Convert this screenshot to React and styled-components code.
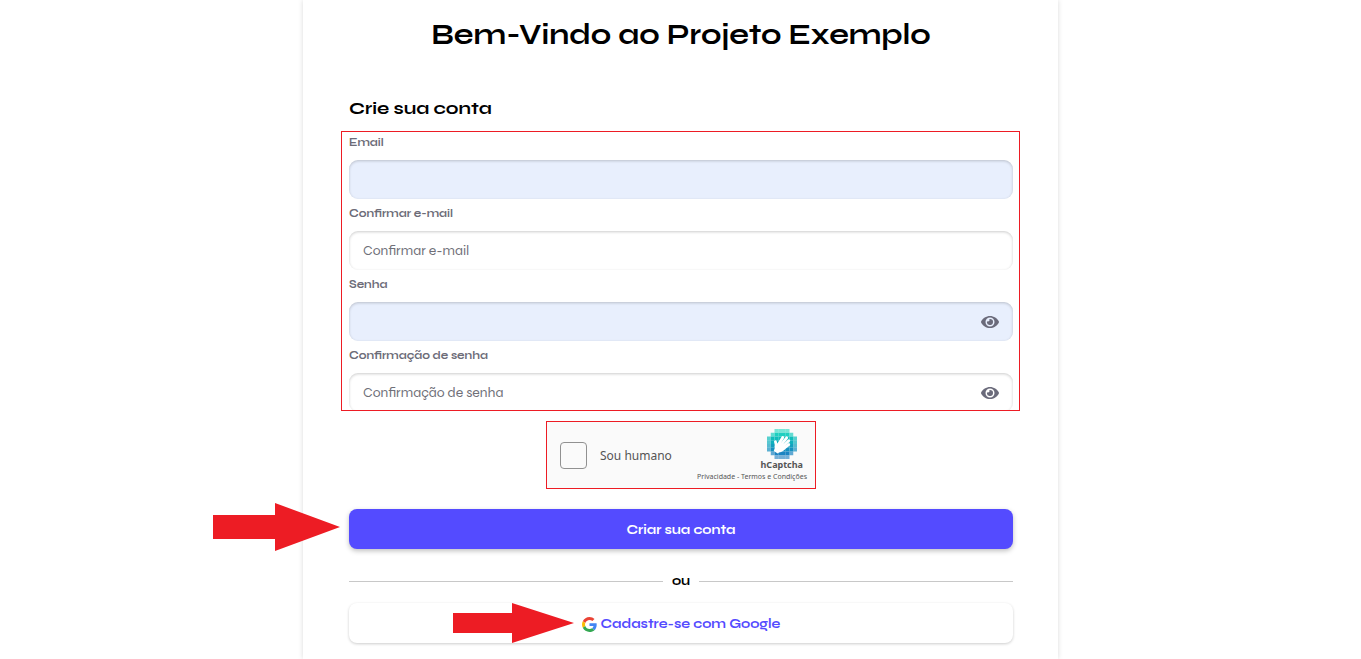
import React, { useState } from "react";
import styled, { createGlobalStyle } from "styled-components";
import { FaEye } from "react-icons/fa";

const fields = [
  { id: "email", label: "Email", type: "email", filled: true },
  {
    id: "confirmEmail",
    label: "Confirmar e-mail",
    type: "email",
    placeholder: "Confirmar e-mail",
  },
  { id: "password", label: "Senha", type: "password", filled: true, eye: true },
  {
    id: "confirmPassword",
    label: "Confirmação de senha",
    type: "password",
    placeholder: "Confirmação de senha",
    eye: true,
  },
];

const Field = ({ id, label, type, placeholder, filled, eye }) => {
  const [visible, setVisible] = useState(false);

  return (
    <FieldRow>
      <Label htmlFor={id}>{label}</Label>
      <InputWrap>
        <Input
          id={id}
          type={visible ? "text" : type}
          placeholder={placeholder}
          $filled={filled}
        />
        {eye && (
          <EyeButton
            type="button"
            aria-label="Mostrar senha"
            onClick={() => setVisible(!visible)}
          >
            <FaEye size={18} />
          </EyeButton>
        )}
      </InputWrap>
    </FieldRow>
  );
};

// first and last filled column of every row of the logo
const rows = [
  [2, 6],
  [1, 7],
  [0, 8],
  [0, 8],
  [0, 8],
  [0, 8],
  [1, 7],
  [2, 6],
];
const rowColors = [
  "#3fdcc8",
  "#1fcfc0",
  "#10bdbb",
  "#0fb0bd",
  "#12a0bf",
  "#1590c0",
  "#1c84c2",
  "#3c8fc8",
];

const CaptchaLogo = () => (
  <svg width="30" height="30" viewBox="0 0 32 32" aria-hidden="true">
    {rows.map(([from, to], y) =>
      Array.from({ length: to - from }, (_, i) => from + i).map((x) => (
        <rect
          key={`${x}-${y}`}
          x={x * 4}
          y={y * 4}
          width="4"
          height="4"
          fill={rowColors[y]}
          opacity={x === from || x === to - 1 || y === 0 || y === 7 ? 0.7 : 1}
        />
      ))
    )}
    <g stroke="#fff" strokeWidth="3" strokeLinecap="round" fill="none">
      <path d="M9.6 19C10.4 16.5 9.6 15 9 13.6" />
      <path d="M12 17L16.8 9" />
      <path d="M14.5 17.5L21 9.4" />
      <path d="M16.5 19L23.2 12.6" />
      <path d="M17.5 21L23.2 16.6" />
    </g>
    <path
      fill="#fff"
      d="M9.6 17L12.6 14.2L16 14.6L19.5 16.5L20 20C18.6 22.8 16 25 12.8 25L11.4 26.2L7.2 23.4L8.4 20.6Z"
    />
  </svg>
);

const GoogleLogo = () => (
  <svg width="15" height="15" viewBox="0 0 48 48" aria-hidden="true">
    <path
      fill="#EA4335"
      d="M24 9.5c3.54 0 6.71 1.22 9.21 3.6l6.85-6.85C35.9 2.38 30.47 0 24 0 14.62 0 6.51 5.38 2.56 13.22l7.98 6.19C12.43 13.72 17.74 9.5 24 9.5z"
    />
    <path
      fill="#4285F4"
      d="M46.98 24.55c0-1.57-.15-3.09-.38-4.55H24v9.02h12.94c-.58 2.96-2.26 5.48-4.78 7.18l7.73 6c4.51-4.18 7.09-10.36 7.09-17.65z"
    />
    <path
      fill="#FBBC05"
      d="M10.53 28.59c-.48-1.45-.76-2.99-.76-4.59s.27-3.14.76-4.59l-7.98-6.19C.92 16.46 0 20.12 0 24c0 3.88.92 7.54 2.56 10.78l7.97-6.19z"
    />
    <path
      fill="#34A853"
      d="M24 48c6.48 0 11.93-2.13 15.89-5.81l-7.73-6c-2.15 1.45-4.92 2.3-8.16 2.3-6.26 0-11.57-4.22-13.47-9.91l-7.98 6.19C6.51 42.62 14.62 48 24 48z"
    />
  </svg>
);

const App = () => {
  return (
    <>
      <GlobalStyle />
      <Panel>
        <Title>Bem-Vindo ao Projeto Exemplo</Title>
        <Subtitle>Crie sua conta</Subtitle>
        <form onSubmit={(e) => e.preventDefault()}>
          <FieldsBox>
            <FieldList>
              {fields.map((field) => (
                <Field key={field.id} {...field} />
              ))}
            </FieldList>
          </FieldsBox>

          <Captcha>
            <Checkbox id="human" type="checkbox" />
            <HumanLabel htmlFor="human">Sou humano</HumanLabel>
            <CaptchaBrand>
              <CaptchaMark>
                <CaptchaLogo />
                <strong>hCaptcha</strong>
              </CaptchaMark>
              <small>
                <a href="#privacidade">Privacidade</a> -{" "}
                <a href="#termos">Termos e Condições</a>
              </small>
            </CaptchaBrand>
          </Captcha>

          <ButtonWrap>
            <SubmitButton type="submit">Criar sua conta</SubmitButton>
            <SubmitArrow viewBox="0 0 127 48" aria-hidden="true">
              <path d="M0 12H62V0L127 24L62 48V36H0Z" />
            </SubmitArrow>
          </ButtonWrap>

          <Divider>ou</Divider>

          <ButtonWrap>
            <GoogleButton type="button">
              <GoogleLogo />
              Cadastre-se com Google
            </GoogleButton>
            <GoogleArrow viewBox="0 0 121 40" aria-hidden="true">
              <path d="M0 10H59V0L121 20L59 40V30H0Z" />
            </GoogleArrow>
          </ButtonWrap>
        </form>
      </Panel>
    </>
  );
};

export default App;

const GlobalStyle = createGlobalStyle`
  * {
    box-sizing: border-box;
  }
  body {
    margin: 0;
    background-color: #ffffff;
    color: #000000;
    font-family: Syne, "DejaVu Sans", sans-serif;
  }
  button, input {
    font-family: inherit;
  }
`;

const Panel = styled.main`
  max-width: 755px;
  min-height: 100vh;
  margin: 0 auto;
  padding: 15px 45px 16px 46px;
  box-shadow: 0 0 5px rgba(0, 0, 0, 0.15);
`;

const Title = styled.h1`
  margin: 0 0 41px;
  font-size: 29px;
  line-height: 40px;
  font-weight: 700;
  text-align: center;
`;

const Subtitle = styled.h2`
  margin: 0 0 11px;
  font-size: 18px;
  line-height: 24px;
  font-weight: 700;
`;

const FieldsBox = styled.div`
  margin: 0 -7px 10px -8px;
  padding: 0 6px 0 7px;
  border: 1px solid #ed1c24;
  overflow: hidden;
`;

const FieldList = styled.div`
  display: flex;
  flex-direction: column;
  gap: 4px;
  margin-bottom: -2px;
`;

const FieldRow = styled.div`
  display: flex;
  flex-direction: column;
  gap: 6px;
`;

const Label = styled.label`
  font-size: 11px;
  line-height: 22px;
  font-weight: 700;
  color: #6c6c78;
`;

const InputWrap = styled.div`
  position: relative;
`;

const Input = styled.input`
  display: block;
  width: 100%;
  height: 39px;
  padding: 0 40px 0 14px;
  border: none;
  border-radius: 9px;
  outline: none;
  background-color: ${({ $filled }) => ($filled ? "#e8effd" : "#ffffff")};
  box-shadow: inset 0 1px 3px rgba(0, 0, 0, 0.2);
  font-size: 14px;
  &::placeholder {
    color: #6f6f78;
    opacity: 1;
  }
`;

const EyeButton = styled.button`
  position: absolute;
  top: 0;
  right: 14px;
  height: 39px;
  display: flex;
  align-items: center;
  padding: 0;
  border: none;
  background: none;
  color: #6b6b7b;
  cursor: pointer;
`;

const Captcha = styled.div`
  display: flex;
  align-items: center;
  width: 270px;
  height: 68px;
  margin: 0 auto 20px;
  padding: 0 8px 0 13px;
  border: 1px solid #ed1c24;
  background-color: #fafafa;
  font-family: "Noto Sans", sans-serif;
  color: #555555;
`;

const Checkbox = styled.input`
  appearance: none;
  flex-shrink: 0;
  width: 27px;
  height: 27px;
  margin: 0 13px 0 0;
  border: 1px solid #919191;
  border-radius: 4px;
  background-color: #fafafa;
  &:checked {
    background-color: #00838f;
  }
`;

const HumanLabel = styled.label`
  padding-top: 2px;
  font-size: 12px;
  line-height: 20px;
`;

const CaptchaBrand = styled.div`
  display: flex;
  flex-direction: column;
  align-items: flex-end;
  margin-left: auto;
  padding-top: 2px;
  small {
    font-size: 7px;
    line-height: 12px;
    white-space: nowrap;
  }
  a {
    color: inherit;
    text-decoration: none;
  }
`;

const CaptchaMark = styled.div`
  display: flex;
  flex-direction: column;
  align-items: center;
  margin-right: 4px;
  strong {
    font-size: 9px;
    line-height: 12px;
  }
`;

const ButtonWrap = styled.div`
  position: relative;
`;

const Button = styled.button`
  display: flex;
  align-items: center;
  justify-content: center;
  gap: 4px;
  width: 100%;
  height: 40px;
  padding: 2px 0 0;
  border: none;
  border-radius: 8px;
  font-size: 13px;
  font-weight: 700;
  cursor: pointer;
`;

const SubmitButton = styled(Button)`
  background-color: #544bff;
  color: #ffffff;
  box-shadow: 0 2px 5px rgba(0, 0, 0, 0.25);
`;

const GoogleButton = styled(Button)`
  background-color: #ffffff;
  color: #544bff;
  box-shadow: 0 1px 3px rgba(0, 0, 0, 0.2);
`;

const Arrow = styled.svg`
  position: absolute;
  fill: #ed1c24;
  pointer-events: none;
`;

const SubmitArrow = styled(Arrow)`
  top: -6px;
  left: -136px;
  width: 127px;
  height: 48px;
`;

const GoogleArrow = styled(Arrow)`
  top: 0;
  right: calc(50% + 107px);
  width: 121px;
  height: 40px;
`;

const Divider = styled.div`
  display: flex;
  align-items: center;
  gap: 9px;
  margin: 22px 0 12px;
  font-size: 13px;
  line-height: 20px;
  font-weight: 700;
  &::before,
  &::after {
    content: "";
    flex: 1;
    height: 1px;
    background-color: #c8c8c8;
  }
`;
